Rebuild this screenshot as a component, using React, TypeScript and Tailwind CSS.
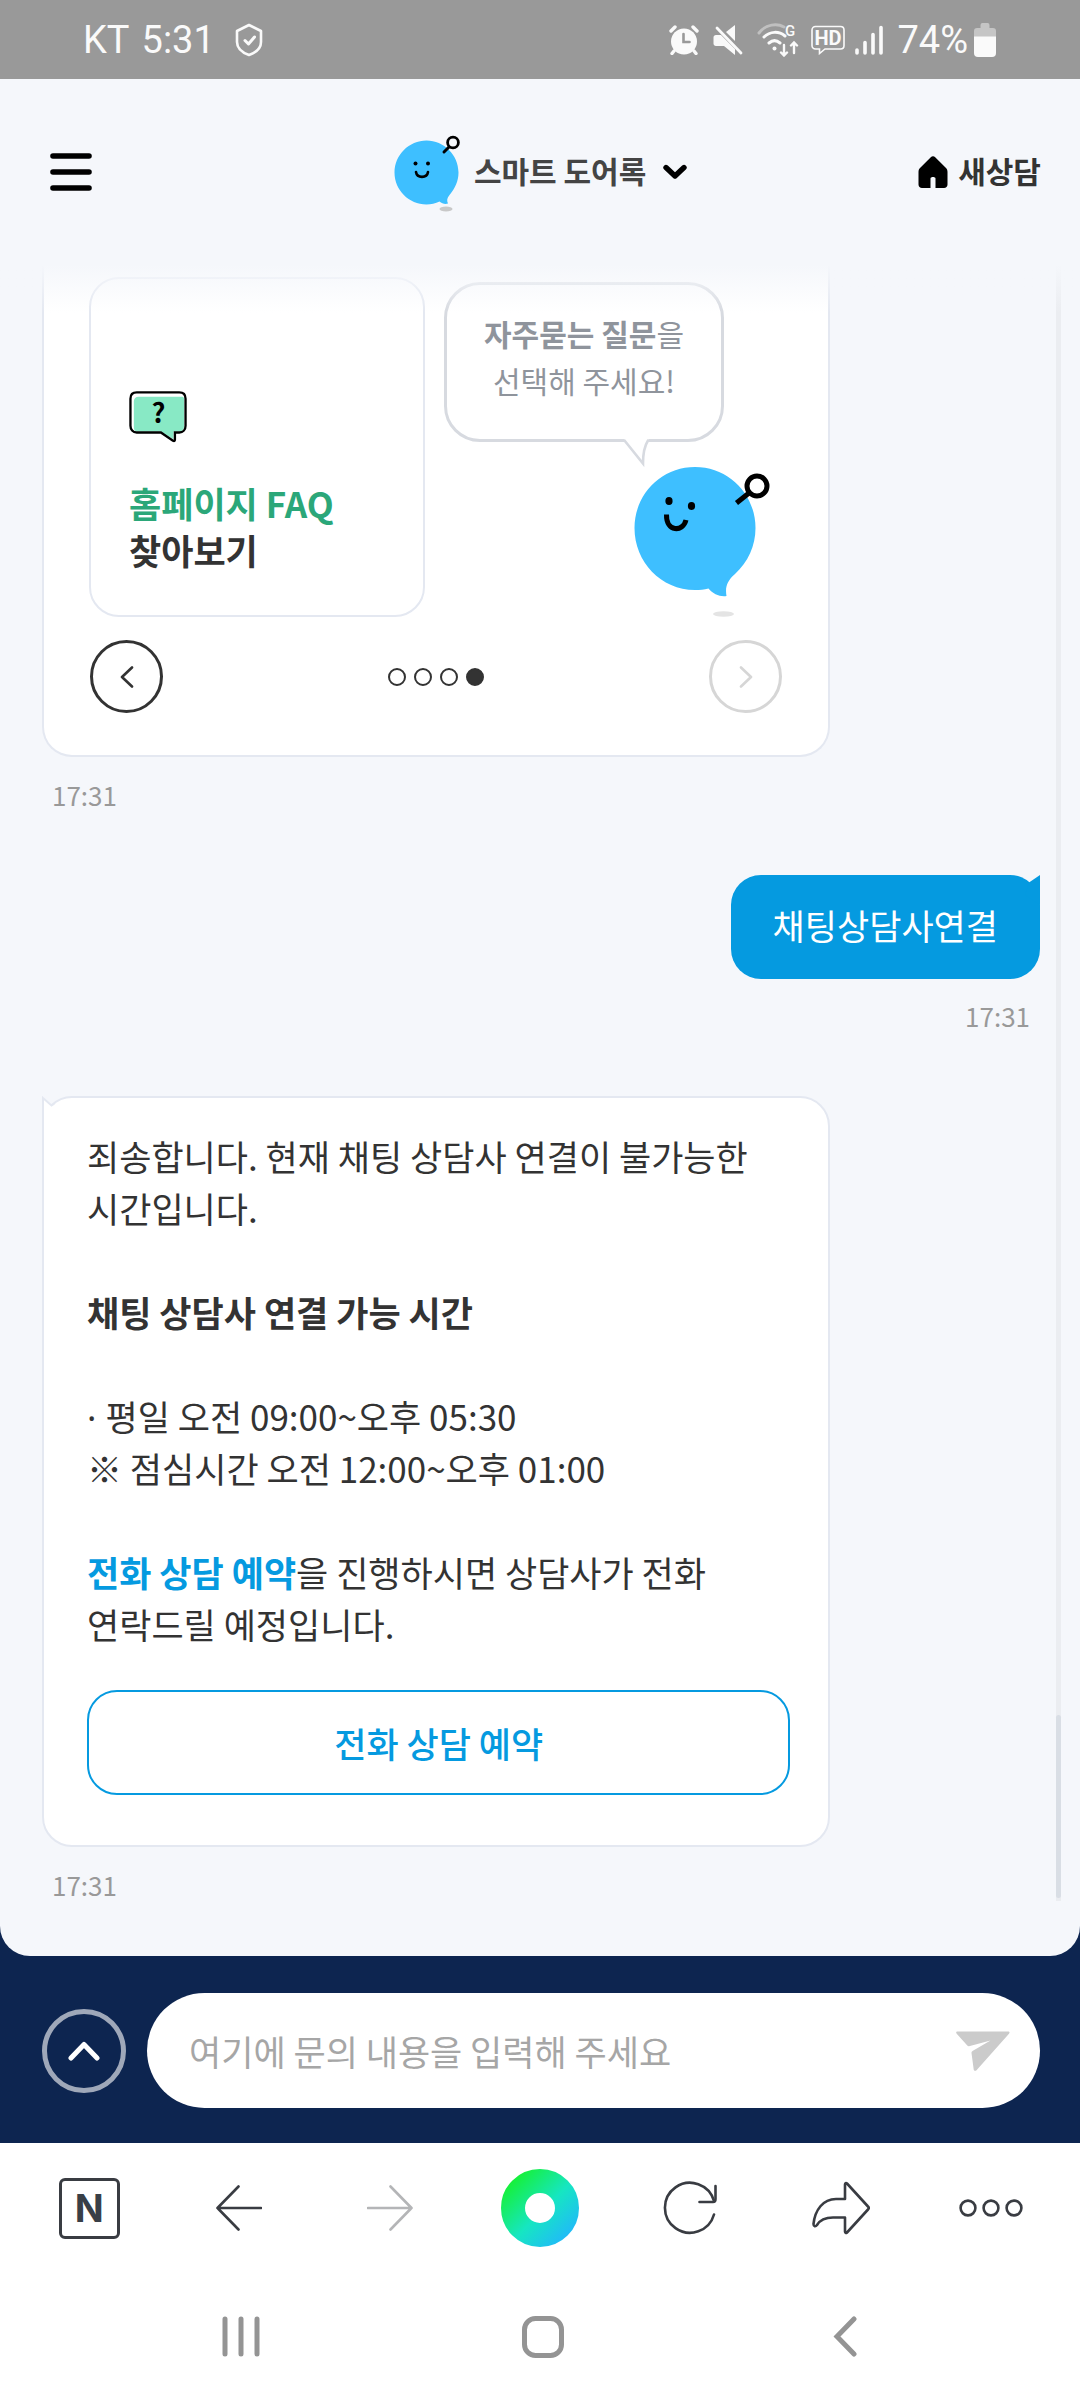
import { useState } from "react";
import type { ReactNode } from "react";

const StatusBar = () => {
  return (
    <div className="flex h-[79px] items-center justify-between bg-[#999999] pr-[84px] pl-[83px] font-[Roboto,sans-serif] text-[38px] leading-none text-[#fafafa]">
      <div className="flex items-center">
        <span>KT</span>
        <span className="ml-3">5:31</span>
        <svg className="ml-5 h-[34px] w-7" viewBox="0 0 28 34" fill="none" stroke="currentColor" strokeWidth="2.6" strokeLinejoin="round">
          <path d="M14 2L26 8V19C26 25 21 29.500 14 32C7 29.500 2 25 2 19V8Z" />
          <path d="M10 17.500l3.500 3.500 6-7" strokeWidth="3" strokeLinecap="round" />
        </svg>
      </div>

      <div className="flex items-center">
        {/* Alarm */}
        <svg className="h-[30px] w-[30px]" viewBox="0 0 30 30" fill="none" stroke="currentColor" strokeLinecap="round">
          <circle cx="15" cy="16.500" r="13" fill="currentColor" stroke="none" />
          <path d="M2 6l4-4M28 6l-4-4M5 26l-2 2.500M25 26l2 2.500" strokeWidth="3.400" />
          <path d="M14.500 9v8h6" stroke="#999999" strokeWidth="2.600" />
        </svg>
        {/* Muted speaker */}
        <svg className="ml-[14px] h-[30px] w-[30px]" viewBox="0 0 30 30" fill="currentColor">
          <path d="M13 7L22 0V16Z" />
          <path d="M3 10H8L22 24V30L11 21H3C1.500 21 0.500 20 0.500 18.500V12.500C0.500 11 1.500 10 3 10Z" />
          <path d="M4 3L28 28" stroke="currentColor" strokeWidth="2.800" strokeLinecap="round" />
        </svg>
        {/* Wifi */}
        <svg className="ml-[14px] h-[34px] w-[42px]" viewBox="0 0 42 34" fill="none" stroke="currentColor" strokeWidth="3" strokeLinecap="round">
          <path d="M2 10C9 1 20 0 27 4" opacity="0.400" />
          <path d="M7 14C13 8 22 8 28 13M12 20C15.500 17 19.500 17 23 20" />
          <circle cx="17.500" cy="25.500" r="2" fill="currentColor" stroke="none" />
          <path d="M27 22v10M24 29.500l3 3 3-3M37 30V20M34 22.500l3-3 3 3" strokeWidth="2.400" />
          <text x="28" y="13" fill="currentColor" stroke="none" fontSize="15" fontWeight="500" fontFamily="Roboto">G</text>
        </svg>
        {/* HD call */}
        <svg className="ml-3 h-[30px] w-[34px]" viewBox="0 0 34 30" fill="none" stroke="currentColor" strokeWidth="1.600">
          <path d="M4.500 1.500H29.500C31.500 1.500 33 3 33 5V20.500C33 22.500 31.500 24 29.500 24H14L8.500 28.500V24H4.500C2.500 24 1 22.500 1 20.500V5C1 3 2.500 1.500 4.500 1.500Z" />
          <text x="17" y="20" textAnchor="middle" fill="currentColor" stroke="none" fontSize="20" fontWeight="700" fontFamily="Roboto">HD</text>
        </svg>
        {/* Signal */}
        <svg className="ml-[10px] h-[30px] w-7" viewBox="0 0 28 30" fill="none" stroke="currentColor" strokeWidth="3.600" strokeLinecap="round">
          <path d="M2 25v3M10 17.500V28M18 9.500V28M26 2.500V28" />
        </svg>
        <span className="ml-[14px]">74%</span>
        {/* Battery */}
        <svg className="ml-[6px] h-[34px] w-[22px]" viewBox="0 0 22 34" fill="currentColor">
          <path d="M6.500 2a2 2 0 0 1 2-2h5a2 2 0 0 1 2 2v3H19a3 3 0 0 1 3 3v6H0V8a3 3 0 0 1 3-3h3.500Z" opacity="0.450" />
          <path d="M0 13.500H22V30a4 4 0 0 1-4 4H4a4 4 0 0 1-4-4Z" />
        </svg>
      </div>
    </div>
  );
};

const Header = () => {
  return (
    <header className="relative z-10 flex h-[186px] items-center justify-between bg-[#f5f7fb] pr-[39px] pl-[50px]">
      <button aria-label="메뉴">
        <svg className="h-[38px] w-[42px]" viewBox="0 0 42 38" stroke="#000" strokeWidth="5.600" strokeLinecap="round">
          <path d="M3 3H39M3 19H39M3 35H39" />
        </svg>
      </button>

      <button className="ml-[72px] flex items-center text-[30px] leading-9 font-bold text-[#444444]">
        <svg className="h-20 w-[68px]" viewBox="0 0 68 80" fill="none">
          <path d="M32.500 8.500C50 8.500 64.500 23 64.500 40.500C64.500 49 61 56.500 55.500 63C53 66 52.500 68.500 54 71.500C51 72.500 48 71.500 45.500 69.500C41.500 71.500 37 72.500 32.500 72.500C15 72.500 0.500 58 0.500 40.500C0.500 23 15 8.500 32.500 8.500Z" fill="#3ebfff" />
          <circle cx="21.500" cy="31.500" r="2" fill="#000" />
          <circle cx="34" cy="31.500" r="2" fill="#000" />
          <path d="M22 40C23 46.500 33 46.500 34 40" stroke="#000" strokeWidth="2.600" strokeLinecap="round" />
          <circle cx="59" cy="10.500" r="5.400" fill="#f5f7fb" stroke="#000" strokeWidth="2.800" />
          <path d="M55 15L50 20" stroke="#000" strokeWidth="3" strokeLinecap="round" />
          <ellipse cx="52" cy="77" rx="6.500" ry="2.600" fill="#c8c8c8" />
        </svg>
        <span className="ml-3 pb-1">스마트 도어록</span>
        <svg className="ml-4 h-4 w-[26px]" viewBox="0 0 26 16" fill="none" stroke="#000" strokeWidth="5.400" strokeLinecap="round" strokeLinejoin="round">
          <path d="M4 3.500L13 12L22 3.500" />
        </svg>
      </button>

      <a href="#" className="flex items-center gap-[10px] text-[30px] leading-9 font-bold text-[#333333]">
        <svg className="h-8 w-[30px]" viewBox="0 0 30 32" fill="#000">
          <path d="M12.800 1.200C14 0 16 0 17.200 1.200L27.500 11.500C29 13 29.500 14 29.500 16V28.500C29.500 30.500 28 32 26 32H17.500V22.500C17.500 20.500 12.500 20.500 12.500 22.500V32H4C2 32 0.500 30.500 0.500 28.500V16C0.500 14 1 13 2.500 11.500Z" />
        </svg>
        <span className="pb-1">새상담</span>
      </a>

      <div className="pointer-events-none absolute inset-x-0 top-full h-12 bg-linear-to-b from-[#f5f7fb] to-[#f5f7fb]/0" />
    </header>
  );
};

const Time = ({ children }: { children: ReactNode }) => (
  <p className="px-[10px] pb-px text-[26px] leading-9 text-[#999999]">{children}</p>
);

const Mascot = () => (
  <svg className="h-[154px] w-[140px]" viewBox="0 0 140 154" fill="none">
    <path d="M61 4C95 4 121.500 31.500 121.500 65C121.500 83 114 99 101 111C93 118 91 124 92.500 133C86 134 79 131 74.500 125.500C70 126.500 66 127 61 127C27 127 0.500 99 0.500 65C0.500 31.500 27 4 61 4Z" fill="#3ebfff" />
    <ellipse cx="35" cy="38" rx="3.600" ry="3.900" fill="#000" />
    <ellipse cx="57.500" cy="43" rx="3.600" ry="3.900" fill="#000" />
    <path d="M32.500 51.500C32 69 49 69.500 52 57" stroke="#000" strokeWidth="5" />
    <circle cx="123" cy="23" r="10" fill="#fff" stroke="#000" strokeWidth="5" />
    <path d="M115 30L102.500 40" stroke="#000" strokeWidth="5" />
    <ellipse cx="89.500" cy="151" rx="10.500" ry="2.800" fill="#e4e4e4" />
  </svg>
);

const SLIDE_COUNT = 4;

const FaqCard = () => {
  const [slide, setSlide] = useState(SLIDE_COUNT - 1);

  return (
    <div className="w-[79%] rounded-b-[30px] border-2 border-t-0 border-[#e4e8f1] bg-white px-[45px] pt-3 pb-[42px]">
      <div className="flex gap-[19px]">
        <a href="#" className="flex h-[340px] w-[336px] flex-col rounded-[30px] border-2 border-[#e4e8f1] px-[38px] pt-[111px] text-[35px] leading-[47px] font-bold text-[#333333]">
          <svg className="h-[54px] w-[58px]" viewBox="0 0 60 54" fill="none">
            <path d="M10 6H55C56.500 6 57 7 57 8.500V36C57 40 55 42 52 42H46V50L33 42H10C7 42 5 41 5 38V11C5 8 7 6 10 6Z" fill="#88e9c5" />
            <path d="M8 1.500H52C56 1.500 58.500 4 58.500 8V36C58.500 40 56 43 52 43H47.500V50.500C47.500 52 46.500 52 45.500 51.500L33 43H8C4 43 1.500 40 1.500 36V8C1.500 4 4 1.500 8 1.500Z" stroke="#000" strokeWidth="2.400" />
            <text x="30.500" y="33" textAnchor="middle" fill="#000" fontSize="28" fontWeight="700" fontFamily="Noto Sans CJK KR">?</text>
          </svg>
          <span className="mt-[35px] text-[#2ba779]">홈페이지 FAQ</span>
          <span>찾아보기</span>
        </a>

        <div className="flex flex-1 flex-col justify-between pt-[5px]">
          <div className="relative h-[160px] w-[280px] rounded-[36px] border-[3px] border-[#d7dae0] pt-[25px] text-center text-[30px] leading-[47px] text-[#8f949c]">
            <p>
              <strong className="font-bold">자주묻는 질문</strong>을
            </p>
            <p>선택해 주세요!</p>
            <svg className="absolute top-[153px] left-[174px] h-[30px] w-[32px]" viewBox="0 0 32 30" fill="#fff" stroke="#d7dae0" strokeWidth="2.600">
              <path d="M3 1H28" stroke="#fff" strokeWidth="5" />
              <path d="M1 2.500H3.500L22 25.500C22 17 23.500 8 27 2.500H31" />
            </svg>
          </div>
          <div className="flex justify-end pr-[9px]">
            <Mascot />
          </div>
        </div>
      </div>

      <div className="mt-[23px] flex items-center justify-between px-px">
        <button
          aria-label="이전"
          onClick={() => setSlide(Math.max(0, slide - 1))}
          disabled={slide === 0}
          className="flex size-[73px] items-center justify-center rounded-full border-[3px] border-[#333333] text-[#333333] disabled:border-[#d6d6d6] disabled:text-[#d6d6d6]"
        >
          <svg className="h-[22px] w-[14px]" viewBox="0 0 14 22" fill="none" stroke="currentColor" strokeWidth="2.600" strokeLinecap="round" strokeLinejoin="round">
            <path d="M12 1.500L2 11L12 20.500" />
          </svg>
        </button>
        <div className="flex gap-2">
          {Array.from({ length: SLIDE_COUNT }, (_, i) => (
            <span
              key={i}
              className={`size-[18px] rounded-full border-2 border-[#333333] ${i === slide ? "bg-[#333333]" : ""}`}
            />
          ))}
        </div>
        <button
          aria-label="다음"
          onClick={() => setSlide(Math.min(SLIDE_COUNT - 1, slide + 1))}
          disabled={slide === SLIDE_COUNT - 1}
          className="flex size-[73px] items-center justify-center rounded-full border-[3px] border-[#333333] text-[#333333] disabled:border-[#d6d6d6] disabled:text-[#d6d6d6]"
        >
          <svg className="h-[22px] w-[14px]" viewBox="0 0 14 22" fill="none" stroke="currentColor" strokeWidth="2.600" strokeLinecap="round" strokeLinejoin="round">
            <path d="M2 1.500L12 11L2 20.500" />
          </svg>
        </button>
      </div>
    </div>
  );
};

const UserBubble = ({ children }: { children: ReactNode }) => (
  <div className="relative rounded-[30px] bg-[#059ae0] px-[42px] pt-6 pb-7 text-[35px] leading-[52px] text-white">
    {children}
    <svg className="absolute top-0 right-0 size-[30px]" viewBox="0 0 30 30" fill="#059ae0">
      <path d="M19 7.500L30 0V30L15 20Z" />
    </svg>
  </div>
);

const NoticeCard = () => (
  <div className="relative w-[79%] rounded-[30px] border-2 border-[#e4e8f1] bg-white pt-8 pr-[38px] pb-[50px] pl-[43px] text-[35px] leading-[52px] text-[#333333]">
    <svg className="absolute -top-[2px] -left-[2px] size-8" viewBox="0 0 32 32" fill="none">
      <path d="M1 32V1L10 9L22 20Z" fill="#fff" />
      <path d="M1 32V2L9.500 9.500L13 7" stroke="#e4e8f1" strokeWidth="2" />
    </svg>
    <p>
      죄송합니다. 현재 채팅 상담사 연결이 불가능한
      <br />
      시간입니다.
    </p>
    <p className="mt-[52px] font-bold">채팅 상담사 연결 가능 시간</p>
    <p className="mt-[52px]">
      <span className="font-['Noto_Sans',sans-serif] leading-none">· </span>평일 오전 09:00~오후 05:30
      <br />※ 점심시간 오전 12:00~오후 01:00
    </p>
    <p className="mt-[52px]">
      <strong className="font-bold text-[#059ae0]">전화 상담 예약</strong>을 진행하시면 상담사가 전화
      <br />
      연락드릴 예정입니다.
    </p>
    <button className="mt-10 h-[105px] w-full rounded-[30px] border-2 border-[#059ae0] font-medium text-[#059ae0]">
      전화 상담 예약
    </button>
  </div>
);

const MessageInput = () => {
  const [message, setMessage] = useState("");

  return (
    <form className="flex items-center gap-[21px] pt-[37px] pr-10 pb-[35px] pl-[42px]" onSubmit={(e) => e.preventDefault()}>
      <button type="button" aria-label="메뉴 열기" className="flex size-[84px] shrink-0 items-center justify-center rounded-full border-[5px] border-[#9fa8b9]">
        <svg className="h-5 w-8" viewBox="0 0 32 20" fill="none" stroke="#fff" strokeWidth="5" strokeLinecap="round" strokeLinejoin="round">
          <path d="M3 17L16 3.500L29 17" />
        </svg>
      </button>
      <div className="flex h-[115px] min-w-0 flex-1 items-center rounded-full bg-white pr-[30px] pl-[42px]">
        <input
          type="text"
          aria-label="문의 내용"
          value={message}
          onChange={(e) => setMessage(e.target.value)}
          placeholder="여기에 문의 내용을 입력해 주세요"
          className="h-full min-w-0 flex-1 text-[35px] text-[#333333] outline-none placeholder:text-[#a6a6a6]"
        />
        <button type="submit" aria-label="전송">
          <svg className="h-10 w-[54px]" viewBox="0 0 54 40" fill="#cbcbcb">
            <path d="M1.500 0.500H52C53.500 0.500 54 1.500 53 2.800L20.500 39.200C19.500 40.300 17.800 39.800 17.700 38.500L15.500 22C15.500 21 15.800 20.500 16.500 20L34.500 9.500L13 15.200C12.300 15.300 11.800 15 11.300 14.500L0.700 2.800C-0.300 1.500 0.200 0.500 1.500 0.500Z" />
          </svg>
        </button>
      </div>
    </form>
  );
};

const BrowserBar = () => (
  <nav className="grid h-[130px] grid-cols-7 place-items-center bg-white px-[14px] text-[#393c42]">
    <button className="flex size-[61px] items-center justify-center rounded-[6px] border-[3px] border-[#393c42] font-[Inter,sans-serif] text-[38px] leading-none font-bold text-[#393f47]">
      N
    </button>
    <button aria-label="뒤로">
      <svg className="size-[46px]" viewBox="0 0 46 46" fill="none" stroke="currentColor" strokeWidth="2.600" strokeLinecap="round" strokeLinejoin="round">
        <path d="M22.500 1.500L1.500 23L22.500 44.500M1.500 23H45" />
      </svg>
    </button>
    <button aria-label="앞으로" className="text-[#b4b5b7]">
      <svg className="size-[46px]" viewBox="0 0 46 46" fill="none" stroke="currentColor" strokeWidth="2.600" strokeLinecap="round" strokeLinejoin="round">
        <path d="M23.500 1.500L44.500 23L23.500 44.500M44.500 23H1" />
      </svg>
    </button>
    <button aria-label="홈">
      <svg className="size-[78px]" viewBox="0 0 78 78" fill="none">
        <defs>
          <linearGradient id="dot" x1="12" y1="12" x2="66" y2="66" gradientUnits="userSpaceOnUse">
            <stop stopColor="#16f03c" />
            <stop offset="0.550" stopColor="#16e6c2" />
            <stop offset="1" stopColor="#20bdf5" />
          </linearGradient>
        </defs>
        <circle cx="39" cy="39" r="27" stroke="url(#dot)" strokeWidth="24" />
      </svg>
    </button>
    <button aria-label="새로고침">
      <svg className="size-[54px]" viewBox="0 0 54 54" fill="none" stroke="currentColor" strokeWidth="2.600" strokeLinecap="round" strokeLinejoin="round">
        <path d="M51 33.500A25 25 0 1 1 51 20" />
        <path d="M52.500 5V18C52.500 20 51.500 21 50 21H36.500" />
      </svg>
    </button>
    <button aria-label="공유">
      <svg className="h-[54px] w-[58px]" viewBox="0 0 58 54" fill="none" stroke="currentColor" strokeWidth="2.600" strokeLinejoin="round">
        <path d="M33 18V3.500C33 2 34 1.500 35 2.500L56 25.500C57 26.500 57 27.500 56 28.500L35 51.500C34 52.500 33 52 33 50.500V36.500H21C12 36.500 8 39 5 44C3.500 46 1.500 45.500 1.500 43C3 29 11 18 24 18Z" />
      </svg>
    </button>
    <button aria-label="더보기">
      <svg className="h-[18px] w-16" viewBox="0 0 64 18" fill="none" stroke="currentColor" strokeWidth="2.600">
        <circle cx="9" cy="9" r="7.400" />
        <circle cx="32" cy="9" r="7.400" />
        <circle cx="55" cy="9" r="7.400" />
      </svg>
    </button>
  </nav>
);

const SystemNav = () => (
  <nav className="grid h-[127px] grid-cols-3 place-items-center bg-white pr-[84px] pl-[90px] text-[#949494]">
    <button aria-label="최근 앱">
      <svg className="h-[41px] w-[38px]" viewBox="0 0 38 41" stroke="currentColor" strokeWidth="5" strokeLinecap="round">
        <path d="M3 3V38M19 3V38M35 3V38" />
      </svg>
    </button>
    <button aria-label="홈 화면">
      <svg className="size-[42px]" viewBox="0 0 42 42" fill="none" stroke="currentColor" strokeWidth="5">
        <rect x="2.500" y="2.500" width="37" height="37" rx="11" />
      </svg>
    </button>
    <button aria-label="이전 화면">
      <svg className="h-[41px] w-6" viewBox="0 0 24 41" fill="none" stroke="currentColor" strokeWidth="5" strokeLinecap="round">
        <path d="M21 3L4 20.500L21 38" />
      </svg>
    </button>
  </nav>
);

const App = () => {
  return (
    <div className="flex min-h-screen flex-col bg-[#0d2550] font-['Noto_Sans_CJK_KR',sans-serif]">
      <StatusBar />
      <div className="flex flex-1 flex-col rounded-b-[30px] bg-[#f5f7fb]">
        <Header />
        <main className="flex flex-1 gap-4 pr-[19px] pb-[52px] pl-[42px]">
          <div className="flex flex-1 flex-col gap-[61px]">
            <section className="flex flex-col gap-5">
              <FaqCard />
              <Time>17:31</Time>
            </section>
            <section className="flex flex-col items-end gap-[19px]">
              <UserBubble>채팅상담사연결</UserBubble>
              <Time>17:31</Time>
            </section>
            <section className="flex flex-col gap-5">
              <NoticeCard />
              <Time>17:31</Time>
            </section>
          </div>
          {/* Scroll track */}
          <div className="mb-[3px] flex w-[5px] flex-col justify-end bg-[#ebedf1] pb-[3px]">
            <div className="h-[183px] rounded-full bg-[#d9dee5]" />
          </div>
        </main>
      </div>
      <MessageInput />
      <BrowserBar />
      <SystemNav />
    </div>
  );
};

export default App;
